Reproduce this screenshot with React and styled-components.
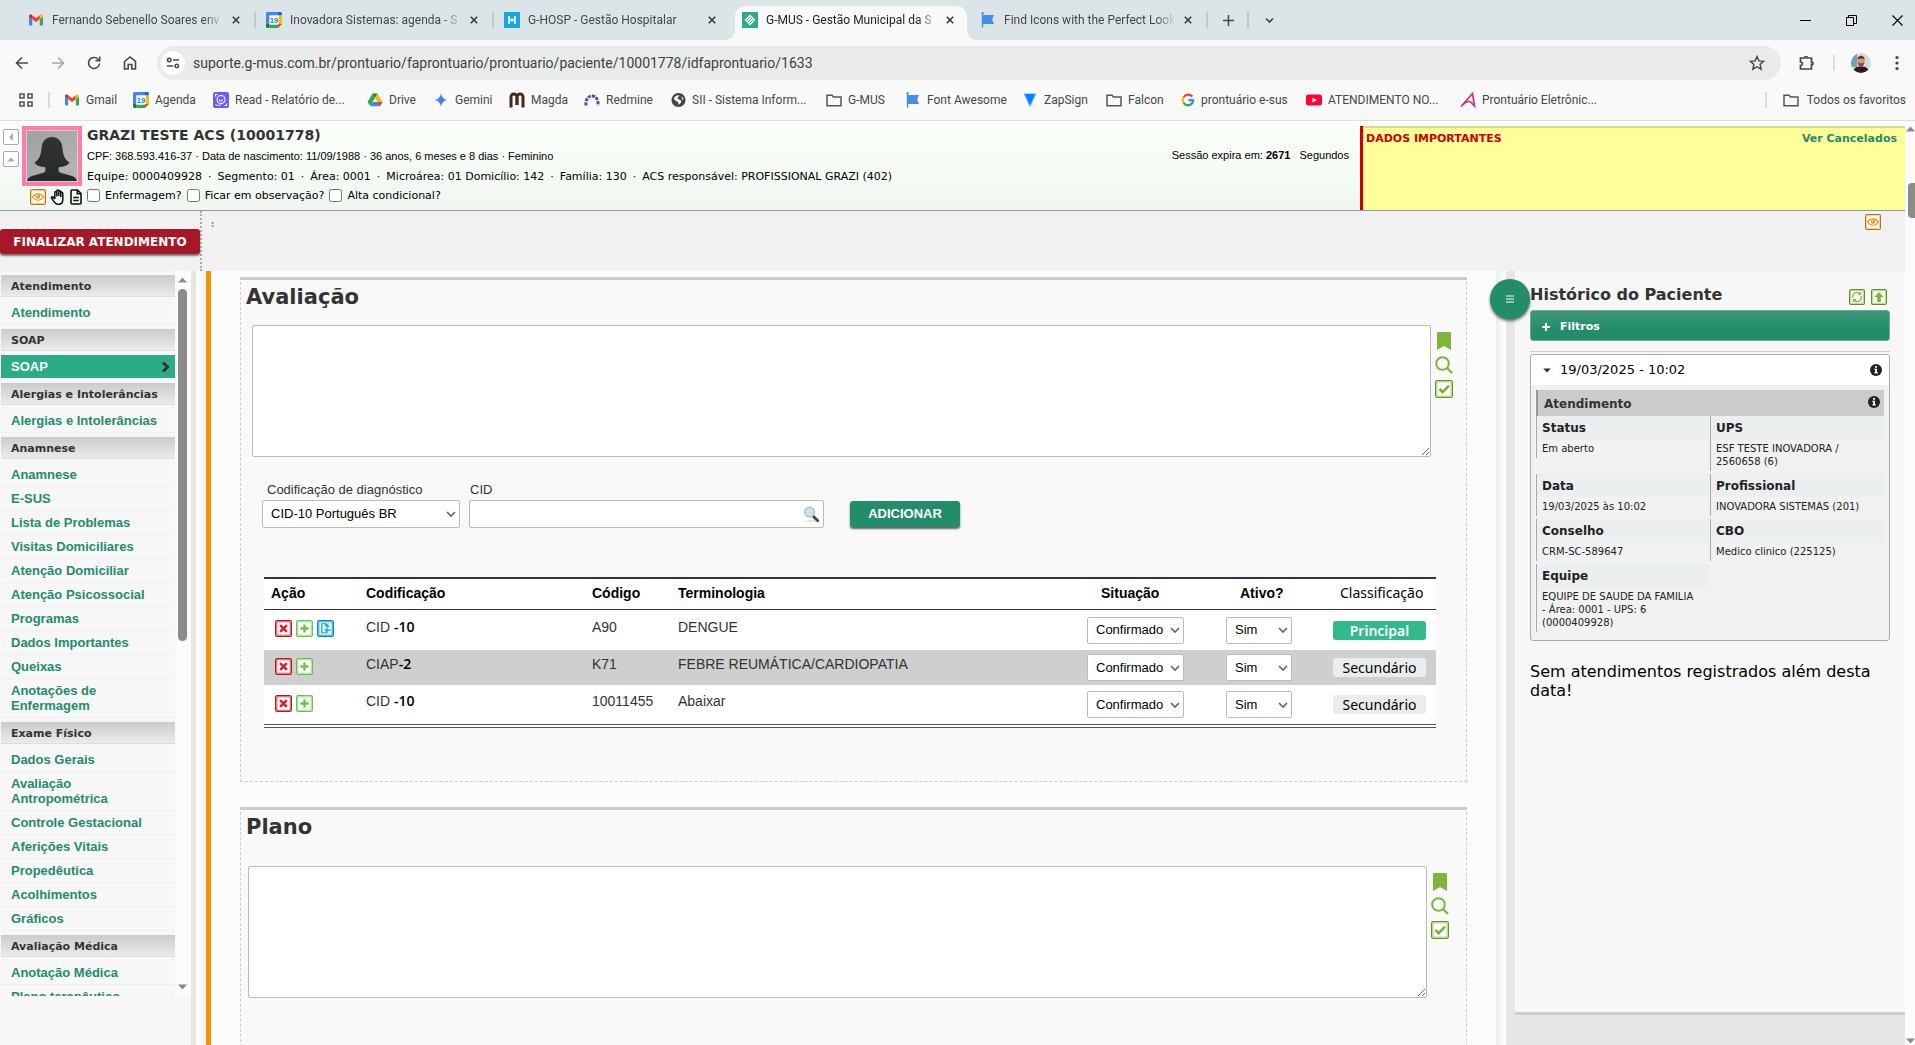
import React from "react";
import styled, { createGlobalStyle, css } from "styled-components";

const verdana = `Verdana, "DejaVu Sans", sans-serif`;
const arial = `Arial, "Liberation Sans", sans-serif`;
const chrome = `"Segoe UI", Roboto, sans-serif`;

const Global = createGlobalStyle`
  *, *::before, *::after { box-sizing: border-box; }
  body { margin: 0; background: #fff; font-family: ${verdana}; color: #000; }
  button { font: inherit; border: 0; padding: 0; background: none; color: inherit; cursor: pointer; }
  a { color: inherit; text-decoration: none; }
  h1, h2, h3, h4, p, ul, dl, dd { margin: 0; padding: 0; font: inherit; }
  ul { list-style: none; }
  svg { display: block; flex: none; }
`;

const Screen = styled.div`
  display: flex;
  flex-direction: column;
  height: 100vh;
  overflow: hidden;
`;

/* ---------- browser frame ---------- */

const TabStrip = styled.div`
  display: flex;
  align-items: flex-end;
  height: 40px;
  padding-left: 18px;
  background: #dbe4e7;
  font: 12px/16px ${chrome};
  color: #444746;
`;

const Tab = styled.div`
  position: relative;
  display: flex;
  align-items: center;
  gap: 8px;
  width: 238px;
  height: 34px;
  padding: 0 16px 6px 10px;
  ${(p) =>
    p.$active &&
    css`
      width: 232px;
      margin: 0 3px;
      padding-left: 7px;
      padding-right: 13px;
      background: #f9f9f9;
      color: #1f1f1f;
      border-radius: 10px 10px 0 0;
      &::before, &::after {
        content: "";
        position: absolute;
        bottom: 0;
        width: 10px;
        height: 10px;
      }
      &::before { left: -10px; background: radial-gradient(circle at 0 0, transparent 10px, #f9f9f9 10px); }
      &::after { right: -10px; background: radial-gradient(circle at 100% 0, transparent 10px, #f9f9f9 10px); }
    `}
`;

const TabTitle = styled.span`
  flex: 1;
  overflow: hidden;
  white-space: nowrap;
  mask-image: linear-gradient(90deg, #000 calc(100% - 20px), transparent);
`;

const TabRule = styled.span`
  width: 2px;
  height: 16px;
  margin: 0 0 12px -2px;
  background: #b9cbd0;
`;

const StripButton = styled.button`
  display: grid;
  place-items: center;
  width: 41px;
  height: 34px;
  padding-bottom: 6px;
`;

const WindowButtons = styled.div`
  display: flex;
  margin-left: auto;
  button { width: 46px; color: #000; }
  button:last-child { width: 41px; padding-left: 5px; }
`;

const Toolbar = styled.div`
  display: flex;
  align-items: center;
  height: 46px;
  padding-left: 4px;
  background: #f9f9f9;
  color: #474747;
`;

const ToolButton = styled.button`
  display: grid;
  place-items: center;
  width: 36px;
  height: 34px;
  opacity: ${(p) => (p.$dim ? 0.45 : 1)};
`;

const AddressBar = styled.div`
  display: flex;
  align-items: center;
  flex: 1;
  height: 34px;
  margin: 0 8px 0 9px;
  padding: 0 16px 0 4px;
  border-radius: 17px;
  background: #e9ebea;
`;

const SiteInfo = styled.button`
  display: grid;
  place-items: center;
  width: 24px;
  height: 24px;
  border-radius: 12px;
  background: #fff;
`;

const Url = styled.input`
  flex: 1;
  border: 0;
  padding: 0 8px;
  background: none;
  outline: 0;
  font: 14px/20px ${chrome};
  color: #3c3f3e;
`;

const ToolRule = styled.span`
  width: 2px;
  height: 16px;
  margin: 0 ${(p) => p.$gap || 8}px;
  background: #cfe0e6;
`;

const Bookmarks = styled.nav`
  display: flex;
  align-items: center;
  height: 35px;
  padding: 0 9px 6px 18px;
  background: #f9f9f9;
  border-bottom: 1px solid #dcdedd;
  font: 12px/16px ${chrome};
  color: #474747;
`;

const Bookmark = styled.a`
  display: flex;
  align-items: center;
  gap: 6px;
  width: ${(p) => p.$w}px;
  white-space: nowrap;
`;

const AllBookmarks = styled.button`
  display: flex;
  align-items: center;
  gap: 8px;
  margin-left: auto;
  white-space: nowrap;
`;

/* ---------- page shell ---------- */

const Page = styled.div`
  display: flex;
  flex: 1;
  min-height: 0;
`;

const PageContent = styled.div`
  display: flex;
  flex-direction: column;
  flex: 1;
  min-width: 0;
`;

const PageScroll = styled.div`
  display: flex;
  flex-direction: column;
  align-items: flex-end;
  width: 10px;
  padding: 5px 0 1px;
  background: #fbfbfb;
`;

const PageThumb = styled.span`
  width: 7px;
  height: 35px;
  margin: 51px 0 auto;
  border-radius: 4px 0 0 4px;
  background: #8b8b8b;
`;

const PatientBar = styled.header`
  display: flex;
  height: 90px;
  background: linear-gradient(#fcfffa, #f0f7f1);
  border-bottom: 1px solid #999;
`;

const CollapseColumn = styled.div`
  display: flex;
  flex-direction: column;
  gap: 6px;
  width: 22px;
  padding: 8px 3px 0;
`;

const CollapseButton = styled.button`
  display: grid;
  place-items: center;
  width: 16px;
  height: 16px;
  border: 1px solid #aaa;
  border-radius: 2px;
  background: #fdfdfd;
`;

const PhotoColumn = styled.div`
  width: 65px;
  padding-top: 5px;
`;

const Photo = styled.div`
  width: 60px;
  height: 60px;
  border: 4px solid #ff7bac;
`;

const PhotoActions = styled.div`
  display: flex;
  align-items: center;
  gap: 4px;
  padding: 3px 0 0 8px;
`;

const PatientInfo = styled.div`
  flex: 1;
  padding-top: 5px;
  font: 11px/20px ${verdana};
  white-space: nowrap;
`;

const PatientName = styled.h1`
  margin-bottom: 2px;
  font: bold 14px/18px ${verdana};
  color: #333;
`;

const ArialLine = styled.p`
  font: 11px/20px ${arial};
`;

const TeamLine = styled.p`
  padding-top: 1px;
  span + span::before { content: "·"; margin: 0 6px; }
`;

const Flags = styled.div`
  display: flex;
  align-items: center;
  gap: 5px;
`;

const Flag = styled.label`
  display: flex;
  align-items: center;
  gap: 5px;
  line-height: 18px;
  input { width: 13px; height: 13px; margin: 0 0 2px; }
`;

const Session = styled.p`
  padding: 24px 11px 0 0;
  font: 11px/20px ${arial};
  white-space: nowrap;
  b { margin-right: 6px; }
`;

const Important = styled.section`
  display: flex;
  justify-content: space-between;
  width: 545px;
  margin-top: 5px;
  padding: 4px 8px 0 3px;
  border-left: 3px solid #c00;
  background: #ff9;
  box-shadow: inset 0 2px 1px #d9d97f;
  font: bold 11px/18px ${verdana};
  color: #c00;
  a { color: #238c6b; }
`;

const ActionBand = styled.div`
  display: flex;
  height: 60px;
  background: #f1f1f1;
`;

const FinishCell = styled.div`
  width: 202px;
  padding-top: 18px;
  border-right: 2px dotted #aaa;
`;

const FinishButton = styled.button`
  width: 200px;
  height: 25px;
  border-radius: 3px;
  background: #a61827;
  box-shadow: 0 2px 2px #777;
  color: #fff;
  font: bold 12px/26px ${verdana};
  white-space: nowrap;
`;

const BandMark = styled.span`
  flex: 1;
  padding: 8px 0 0 9px;
  font: bold 8px/12px ${verdana};
  color: #777;
`;

const BandIcon = styled.div`
  padding: 3px 24px 0 0;
`;

const Columns = styled.div`
  display: flex;
  flex: 1;
  min-height: 0;
`;

/* ---------- left menu ---------- */

const Sidebar = styled.nav`
  display: flex;
  align-items: stretch;
  width: 191px;
  padding-bottom: 49px;
  background: #f7f7f7;
  border-right: 1px solid #fcfcfc;
`;

const MenuList = styled.div`
  width: 175px;
  padding: 4px 0 0 1px;
  overflow: hidden;
`;

const MenuHeading = styled.h2`
  height: 22px;
  padding: 1px 0 0 10px;
  border-bottom: 1px solid #ddd;
  background: linear-gradient(#cbcbcb, #ebebeb);
  font: bold 11px/21px ${verdana};
  color: #333;
`;

const MenuGroup = styled.ul`
  padding: 4px 0;
`;

const MenuLink = styled.a`
  display: flex;
  align-items: center;
  justify-content: space-between;
  padding: 4px 4px 4px 10px;
  border-bottom: 1px solid #efefef;
  font: bold 13px/15px ${arial};
  color: #238c6b;
  ${(p) =>
    p.$selected &&
    css`
      background: #2cac86;
      border-bottom-color: #f7f7f7;
      color: #fff;
    `}
`;

const MenuText = styled.span`
  max-width: 150px;
`;

const MenuScroll = styled.div`
  display: flex;
  flex-direction: column;
  align-items: center;
  width: 15px;
  padding: 6px 0;
  background: #fbfbfb;
`;

const MenuThumb = styled.span`
  width: 9px;
  height: 352px;
  margin: 6px 0 auto;
  border-radius: 5px;
  background: #8b8b8b;
`;

const Gutter = styled.div`
  width: ${(p) => p.$w}px;
  background: #e6e7e4;
`;

const Shade = styled.div`
  width: 10px;
  background: linear-gradient(${(p) => (p.$right ? "90deg" : "270deg")}, #ececec, #fff 90%);
`;

/* ---------- record ---------- */

const Record = styled.main`
  flex: 1;
  min-width: 0;
  padding: 6px 29px 0;
  border-left: 5px solid #f29400;
  background: #fcfcfc;
`;

const Section = styled.section`
  padding-bottom: 53px;
  margin-bottom: 25px;
  border: 1px dashed #ccc;
  border-top: 3px solid #ccc;
  background: #f9f9f9;
`;

const SectionTitle = styled.h2`
  padding: 4px 5px ${(p) => p.$gap}px;
  font: bold 21px/26px ${verdana};
  color: #333;
`;

const NoteRow = styled.div`
  display: flex;
  gap: 4px;
  padding: 0 ${(p) => 24 - p.$indent}px 0 ${(p) => p.$indent}px;
`;

const Note = styled.textarea`
  display: block;
  flex: 1;
  height: 132px;
  border: 1px solid #bbb;
  border-radius: 2px;
  background: #fff;
`;

const NoteTools = styled.div`
  display: flex;
  flex-direction: column;
  align-items: center;
  gap: 6px;
  width: 18px;
  padding-top: 7px;
`;

const CodeForm = styled.form`
  display: flex;
  align-items: flex-end;
  padding: 25px 21px 49px;
`;

const Field = styled.div`
  display: flex;
  flex-direction: column;
  gap: 2px;
  width: ${(p) => p.$w}px;
  margin-right: ${(p) => p.$gap}px;
`;

const FieldLabel = styled.label`
  padding-left: ${(p) => p.$indent}px;
  font: 13px/16px ${arial};
  color: #333;
`;

const SelectBox = styled.div`
  position: relative;
  width: ${(p) => p.$w};
  height: ${(p) => p.$h}px;
  select {
    appearance: none;
    width: 100%;
    height: 100%;
    padding: 0 0 0 8px;
    border: 1px solid #bbb;
    border-radius: 2px;
    background: #fff;
    font: 13px/16px ${arial};
    color: #000;
  }
  svg {
    position: absolute;
    top: 50%;
    right: 4px;
    margin-top: -5px;
    pointer-events: none;
  }
`;

const SearchBox = styled.div`
  display: flex;
  align-items: center;
  height: 28px;
  padding-right: 3px;
  border: 1px solid #bbb;
  border-radius: 2px;
  background: #fff;
  input { flex: 1; min-width: 0; border: 0; outline: 0; background: none; font: 13px ${arial}; }
`;

const AddButton = styled.button`
  width: 110px;
  height: 26px;
  margin-bottom: 1px;
  border-radius: 3px;
  background: #238c6b;
  box-shadow: 0 2px 2px #666;
  color: #fff;
  font: bold 13px/24px ${arial};
`;

const TableWrap = styled.div`
  padding: 0 30px 0 23px;
`;

const CodeTable = styled.table`
  width: 100%;
  table-layout: fixed;
  border-collapse: separate;
  border-spacing: 0;
  background: #fff;
  font: 14px/18px ${arial};
  color: #333;
  tbody tr:last-child td { border-bottom: 4px double #555; }
`;

const Col = styled.col`
  width: ${(p) => (p.$w ? p.$w + "px" : "auto")};
`;

const Th = styled.th`
  height: 33px;
  padding: 0 0 2px ${(p) => p.$indent || 7}px;
  border-top: 2px solid #333;
  border-bottom: 1px solid #333;
  text-align: left;
  font-weight: bold;
  color: #000;
  ${(p) => p.$light && css`font: 14px/18px "Noto Sans", "Open Sans", sans-serif;`}
`;

const Tr = styled.tr`
  height: ${(p) => p.$h}px;
  background: ${(p) => (p.$striped ? "#cfcfcf" : "#fff")};
`;

const Td = styled.td`
  padding: 0 0 0 8px;
  vertical-align: middle;
`;

const TextTd = styled(Td)`
  padding: 0 0 7px 7px;
  b { font: 600 14px/18px "Open Sans", "Noto Sans", sans-serif; color: #000; }
`;

const RowActions = styled.div`
  display: flex;
  gap: 4px;
  padding: 0 0 3px 3px;
`;

const Badge = styled.button`
  display: block;
  width: 93px;
  height: 19px;
  border-radius: 3px;
  background: ${(p) => (p.$main ? "#32b98c" : "#e9eeed")};
  color: ${(p) => (p.$main ? "#fff" : "#000")};
  font: ${(p) => (p.$main ? 600 : 400)} 14px/19px "Noto Sans", "Open Sans", sans-serif;
`;

/* ---------- history ---------- */

const HistoryColumn = styled.aside`
  position: relative;
  display: flex;
  flex-direction: column;
  width: 390px;
  padding-bottom: 30px;
  background: #e6e6e4;
`;

const HistoryPanel = styled.div`
  flex: 1;
  padding: 13px 15px 0;
  border-bottom: 3px solid #ccc;
  background: #f7f7f7;
`;

const MenuFab = styled.button`
  position: absolute;
  top: 8px;
  left: -25px;
  display: grid;
  place-items: center;
  width: 40px;
  height: 40px;
  border-radius: 20px;
  background: #238c6b;
  box-shadow: 0 2px 3px #666;
`;

const HistoryHead = styled.div`
  display: flex;
  justify-content: space-between;
  height: 26px;
`;

const HistoryTitle = styled.h2`
  font: bold 16px/22px ${verdana};
  color: #333;
`;

const HistoryTools = styled.div`
  display: flex;
  gap: 6px;
  padding: 5px 3px 0 0;
  button { height: 16px; }
`;

const FilterButton = styled.button`
  display: flex;
  align-items: center;
  gap: 10px;
  width: 100%;
  height: 31px;
  padding: 2px 11px 0;
  border: 1px solid #7aa393;
  border-radius: 3px;
  background: linear-gradient(#3c9878, #238c6b 70%);
  color: #fff;
  font: bold 11px/20px ${verdana};
`;

const Rule = styled.hr`
  height: 1px;
  margin: 10px 0 2px;
  border: 0;
  background: #ccc;
`;

const Visit = styled.article`
  border: 1px solid #aaa;
  border-radius: 3px;
  background: #f1f1f1;
`;

const VisitHead = styled.button`
  display: flex;
  align-items: center;
  gap: 9px;
  width: 100%;
  height: 30px;
  padding: 0 7px 0 12px;
  border-radius: 3px 3px 0 0;
  background: #fff;
  font: 13px/20px ${verdana};
  text-align: left;
  span { flex: 1; }
`;

const VisitBody = styled.div`
  padding: 5px 5px 8px;
`;

const VisitTitle = styled.h3`
  display: flex;
  justify-content: space-between;
  height: 26px;
  padding: 6px 4px 0 6px;
  border-left: 2px solid #999;
  background: #cbcbcb;
  font: bold 12px/16px ${verdana};
  color: #333;
`;

const Facts = styled.dl`
  display: grid;
  grid-template-columns: 1fr 1fr;
  align-items: start;
  row-gap: 3px;
`;

const Fact = styled.div`
  border-left: 1px solid #aaa;
  dt {
    padding: 1px 0 0 5px;
    background: #ebeff0;
    font: bold 12px/22px ${verdana};
    color: #222;
  }
  dd {
    padding: 3px 12px 3px 5px;
    font: 10px/13px ${verdana};
    color: #222;
  }
`;

const Empty = styled.p`
  margin-top: 21px;
  font: 16px/19px ${verdana};
`;

/* ---------- drawings ---------- */

const Line = ({ d, s = 16, w = 1.6, c = "currentColor", vb = 16 }) => (
  <svg width={s} height={s} viewBox={`0 0 ${vb} ${vb}`} fill="none" stroke={c} strokeWidth={w}>
    <path d={d} />
  </svg>
);

const Close = () => <Line s={8} vb={8} w={1.5} c="#333" d="M.8.8l6.4 6.4M7.2.8L.8 7.2" />;

const Arrow = ({ up, w = 9, h = 6, c = "#8b8b8b" }) => (
  <svg width={w} height={h} viewBox="0 0 9 6">
    <path d={up ? "M0 5.5L4.5.5 9 5.5z" : "M0 .5L4.5 5.5 9 .5z"} fill={c} />
  </svg>
);

const Gmail = () => (
  <svg width="16" height="16" viewBox="0 0 16 16">
    <path d="M1 13.5V4.5l3.2 2.4v6.6H2a1 1 0 0 1-1-1z" fill="#4285f4" />
    <path d="M11.8 13.5V6.9L15 4.5v8a1 1 0 0 1-1 1z" fill="#34a853" />
    <path d="M4.2 3.2L8 6l3.8-2.8v3.9L8 10 4.2 7.1z" fill="#ea4335" />
    <path d="M1 4.6V4c0-1.6 1.7-2 2.7-1.2l.5.4v3.9z" fill="#c5221f" />
    <path d="M15 4.6V4c0-1.6-1.7-2-2.7-1.2l-.5.4v3.9z" fill="#fbbc04" />
  </svg>
);

const Calendar = () => (
  <svg width="16" height="16" viewBox="0 0 16 16">
    <path d="M1.5 0H12v3.5H3.5V12H0V1.5A1.5 1.5 0 0 1 1.5 0z" fill="#4285f4" />
    <path d="M12 0h2.5A1.5 1.5 0 0 1 16 1.5V3.5h-4z" fill="#1967d2" />
    <path d="M12.5 3.5H16V12h-3.5z" fill="#fbbc04" />
    <path d="M3.5 12.5H12V16H3.5z" fill="#34a853" />
    <path d="M0 12h3.5v4h-2A1.5 1.5 0 0 1 0 14.500z" fill="#188038" />
    <path d="M12 12h4l-4 4z" fill="#ea4335" />
    <path d="M3.5 3.5h9V12l-.5.5H3.5z" fill="#fff" />
    <text x="8" y="10.8" fontSize="7.5" fontWeight="700" fontFamily="Arial, Liberation Sans, sans-serif" textAnchor="middle" fill="#1a73e8">19</text>
  </svg>
);

const Hosp = () => (
  <svg width="16" height="16" viewBox="0 0 16 16">
    <path d="M0 0h16v16H0z" fill="#14a7dc" />
    <path d="M5 4v8M11 4v8M6 8h4M8 6.300v3.400" stroke="#fff" strokeWidth="1.6" />
  </svg>
);

const Gmus = () => (
  <svg width="16" height="16" viewBox="0 0 16 16">
    <path d="M0 0h16v16H0z" fill="#2cac86" />
    <path d="M8 2.500L13.500 8 8 13.500 2.500 8z" fill="#fff" />
    <path d="M4.500 8.500L8.500 4.500M6 10l4-4M7.500 11.500l4-4" stroke="#2cac86" strokeWidth=".9" />
  </svg>
);

const Flagged = () => (
  <svg width="16" height="16" viewBox="0 0 16 16">
    <path d="M1.500 1.200a1.200 1.200 0 1 1 1.700 1.100V3H14l-1.800 4.500L14 12H3.200v3.500H1.800V2.200z" fill="#448fe6" />
  </svg>
);

const Read = () => (
  <svg width="16" height="16" viewBox="0 0 16 16" fill="none" stroke="#fff">
    <rect width="16" height="16" rx="2" fill="#6d5cf6" stroke="none" />
    <circle cx="8" cy="7.500" r="4" strokeWidth="1.1" />
    <path d="M6.500 7.500a1.500 1.500 0 0 0 3 0M2.500 4.500v-2h2M11.500 13.500h2v-2" strokeWidth="1.1" />
    <path d="M2.500 12.500c2 1.500 4 1.200 5.500 0" strokeWidth="1" />
  </svg>
);

const Drive = () => (
  <svg width="16" height="16" viewBox="0 0 16 16">
    <path d="M5.500 1.500h5L8 6z" fill="#188038" />
    <path d="M5.500 1.500L8 6l-4.700 8L.5 10z" fill="#34a853" />
    <path d="M10.500 1.500L15.500 10H10.500L8 6z" fill="#fbbc04" />
    <path d="M5.700 10h9.800l-2.700 4.300H3.200z" fill="#4285f4" />
    <path d="M10.500 10h5l-2.500 4z" fill="#ea4335" />
  </svg>
);

const Gemini = () => (
  <svg width="16" height="16" viewBox="0 0 16 16">
    <defs>
      <linearGradient id="gem" x1="0" x2="1"><stop stopColor="#4fa0f5" /><stop offset=".6" stopColor="#3f7be8" /><stop offset="1" stopColor="#a9b7f0" /></linearGradient>
    </defs>
    <path d="M8 1c.6 4.200 2.800 6.400 7 7-4.200.6-6.400 2.800-7 7-.6-4.200-2.800-6.400-7-7 4.200-.6 6.400-2.800 7-7z" fill="url(#gem)" />
  </svg>
);

const Magda = () => (
  <Line w={3} c="#43291f" d="M2 15.500V4.800a2.900 2.900 0 0 1 5.800 0V13M8.200 13V4.800a2.900 2.900 0 0 1 5.800 0v10.700" />
);

const Redmine = () => (
  <svg width="16" height="16" viewBox="0 0 16 16" fill="none" stroke="#5b4b9f" strokeWidth="3">
    <path d="M2 13.500C1.500 7.500 4 4 8 4s6.500 3.500 6 9.500" strokeDasharray="3.2 1" />
  </svg>
);

const Globe = () => (
  <svg width="15" height="16" viewBox="0 0 16 16">
    <circle cx="8" cy="8" r="7.500" fill="#424548" />
    <path d="M3 6c1.500-2.500 4-3.500 6-3-.5 2-2 2-2 3.200 0 1.300 3.500 1 4 3.200.2 1.600-1.500 2.600-3 4 .2-2-.2-3-1.500-3.800C5.500 9 3.500 8 3 6z" fill="#f9f9f9" />
    <path d="M11 4l2.500 2.500L12 8z" fill="#f9f9f9" />
  </svg>
);

const Folder = () => <Line w={1.5} c="#555" d="M1 3.200h5l1.500 1.700H15v8.900H1z" />;

const Zap = () => (
  <svg width="16" height="16" viewBox="0 0 16 16">
    <path d="M1.500 1.500h13L8.600 14.500H7.400z" fill="#55c4fb" />
    <path d="M3 2h10L8 13z" fill="#0a7cff" />
  </svg>
);

const Google = () => (
  <svg width="14" height="14" viewBox="0 0 16 16" fill="none" strokeWidth="2.6">
    <path d="M12.800 4A6 6 0 0 0 3 4.800" stroke="#ea4335" />
    <path d="M3 4.800a6 6 0 0 0 0 6.400" stroke="#fbbc04" />
    <path d="M3 11.200A6 6 0 0 0 12 12.500" stroke="#34a853" />
    <path d="M12 12.500A6 6 0 0 0 13.800 8.200H8.500" stroke="#4285f4" />
  </svg>
);

const YouTube = () => (
  <svg width="16" height="16" viewBox="0 0 16 16">
    <rect y="2.500" width="16" height="11" rx="2.500" fill="#f03" />
    <path d="M6.500 5.500L11 8l-4.500 2.500z" fill="#fff" />
  </svg>
);

const Letter = () => <Line w={1.6} c="#e0266b" d="M1 14.500L12.500 1.500 14.500 14 10 9.500C6 9 3.500 11.500 1 14.500" />;

const Avatar = () => (
  <svg width="20" height="20" viewBox="0 0 20 20">
    <defs><clipPath id="av"><circle cx="10" cy="10" r="10" /></clipPath></defs>
    <g clipPath="url(#av)">
      <path d="M0 0h20v20H0z" fill="#d5dcd6" />
      <path d="M0 0h6v14H0z" fill="#6fa3ad" />
      <path d="M2 20c0-5 3-6.500 8-6.500s8 1.500 8 6.500z" fill="#2f1a26" />
      <ellipse cx="10" cy="8" rx="3.600" ry="5" fill="#d39a80" />
      <path d="M6.300 6.500c0-5 7.400-5 7.400 0-2-1.300-5.400-1.300-7.400 0z" fill="#5b3a2e" />
      <path d="M6.500 9c.5 6 6.500 6 7 0-1.500 1.800-5.500 1.800-7 0z" fill="#8a4a3a" />
    </g>
  </svg>
);

const Woman = () => (
  <svg width="52" height="52" viewBox="0 0 52 52">
    <defs>
      <linearGradient id="bg" x2="1" y2="1"><stop stopColor="#a0a0a0" /><stop offset="1" stopColor="#b5b5b5" /></linearGradient>
      <linearGradient id="fg" x2="0" y2="1"><stop stopColor="#333" /><stop offset="1" stopColor="#222b29" /></linearGradient>
    </defs>
    <path d="M0 0h52v52H0z" fill="url(#bg)" stroke="#dcdcdc" strokeWidth="1.5" />
    <path d="M1 51c1-6 11-6 17-8.500 1.500-.7 1.800-3 1-5.500-4 0-8-1-10.500-4.500 5-3 6.500-8 7-14C16 11 20 7 26 7s10 4 10.500 11.500c.5 6 2 11 7 14C41 36 37 37 33 37c-.8 2.500-.5 4.800 1 5.500 6 2.500 16 2.500 17 8.500z" fill="url(#fg)" />
  </svg>
);

const Boxed = ({ s = 16, edge, inner, fill = "#fff", children }) => (
  <svg width={s} height={s} viewBox="0 0 16 16" fill="none">
    <rect x=".6" y=".6" width="14.8" height="14.8" rx="1.5" fill={fill} stroke={edge} strokeWidth="1.2" />
    <rect x="1.7" y="1.7" width="12.6" height="12.6" stroke={inner} strokeWidth="1" />
    {children}
  </svg>
);

const EyeIcon = () => (
  <Boxed edge="#b9720f" inner="#fbcf8f">
    <path d="M2.500 8c3-4.300 8-4.300 11 0-3 4.300-8 4.300-11 0z" stroke="#f28c1a" strokeWidth="1.2" />
    <circle cx="8" cy="7.6" r="2.2" fill="#f28c1a" />
    <circle cx="7.4" cy="6.9" r=".8" fill="#fff" />
  </Boxed>
);

const HandIcon = () => (
  <Line w={1.5} c="#111" d="M4.800 10V3.600c0-1.500 2-1.500 2 0V7.500M6.800 7V2.200c0-1.500 2-1.500 2 0V7M8.800 7V2.800c0-1.500 2-1.500 2 0V7.500M10.800 8V4.400c0-1.400 2-1.400 2 0v6.200c0 2.800-1.500 4.800-4.300 4.800-2.500 0-3.500-1-4.700-3L1.600 9.200c-.6-1.300.9-2 1.700-1L4.800 10" />
);

const DocIcon = () => (
  <svg width="12" height="16" viewBox="0 0 12 16" fill="none" stroke="#111" strokeWidth="1.6">
    <path d="M1 2a1 1 0 0 1 1-1h5.500L11 4.500V14a1 1 0 0 1-1 1H2a1 1 0 0 1-1-1zM7.300 1v3.700H11M3.300 8.500h5.400M3.300 11.500h5.400" />
  </svg>
);

const BookmarkIcon = () => (
  <svg width="14" height="18" viewBox="0 0 14 18"><path d="M0 1.200Q0 0 1.200 0h11.600Q14 0 14 1.200V18l-7-4-7 4z" fill="#80b43c" /></svg>
);

const LensIcon = () => (
  <svg width="18" height="18" viewBox="0 0 18 18" fill="none" stroke="#80b43c" strokeWidth="2">
    <circle cx="7.5" cy="7.5" r="6.3" /><path d="M12 12l5 5" strokeWidth="2.4" />
  </svg>
);

const CheckIcon = () => (
  <Boxed s={18} edge="#5f9424" inner="#b4d88a"><path d="M4 8l2.800 2.800L12.500 5" stroke="#76b02e" strokeWidth="2.2" /></Boxed>
);

const DeleteIcon = () => (
  <Boxed s={17} edge="#b01822" inner="#ea5a63"><path d="M4.800 4.800l6.400 6.400M11.200 4.800l-6.400 6.400" stroke="#d81e2c" strokeWidth="2.4" /></Boxed>
);

const PlusIcon = () => (
  <Boxed s={17} edge="#6cbd52" inner="#a9de95"><path d="M8 4.200v7.600M4.200 8h7.600" stroke="#66c24a" strokeWidth="2.2" /></Boxed>
);

const ImportIcon = () => (
  <Boxed s={17} edge="#0e86b4" inner="#35b9e6" fill="#dff5fd"><path d="M10 12H4.500V3.500h4l2 2v1.500M8.300 3.500v2.300h2.200M13 9.500H8.500M10 7.500l-2 2 2 2" stroke="#1a9fd4" strokeWidth="1.1" /></Boxed>
);

const RefreshIcon = () => (
  <Boxed edge="#5f8f1f" inner="#b4d88a"><path d="M3.800 8.800A4.300 4.300 0 0 1 11 4.700M12.200 7.200A4.300 4.300 0 0 1 5 11.300M11.500 2.800v2.500H9M4.500 13.200v-2.500H7" stroke="#86bb3f" strokeWidth="1.3" /></Boxed>
);

const UpIcon = () => (
  <Boxed edge="#5f8f1f" inner="#b4d88a"><path d="M8 3l4.800 5H9.800v5H6.200V8h-3z" fill="#80b43c" /></Boxed>
);

const InfoIcon = () => (
  <svg width="12" height="12" viewBox="0 0 12 12">
    <circle cx="6" cy="6" r="6" fill="#222" />
    <path d="M5.100 2h1.900v1.700H5.100zM4.400 4.800H7V8.300h.8v1.200H4.400V8.300h.8V6h-.8z" fill="#fff" />
  </svg>
);

const GlassIcon = () => (
  <svg width="17" height="17" viewBox="0 0 17 17">
    <ellipse cx="8" cy="15" rx="6" ry="1.2" fill="#e6e6e6" />
    <path d="M10 10l5.500 5.500" stroke="#444" strokeWidth="2.8" />
    <circle cx="6.5" cy="6" r="4.8" fill="#cfe3ee" stroke="#b3bcc2" strokeWidth="1.4" />
  </svg>
);

/* ---------- data ---------- */

const tabs = [
  { icon: <Gmail />, title: "Fernando Sebenello Soares env" },
  { icon: <Calendar />, title: "Inovadora Sistemas: agenda - S" },
  { icon: <Hosp />, title: "G-HOSP - Gestão Hospitalar" },
  { icon: <Gmus />, title: "G-MUS - Gestão Municipal da S", active: true },
  { icon: <Flagged />, title: "Find Icons with the Perfect Look" },
];

const bookmarks = [
  [<Gmail />, "Gmail", 69],
  [<Calendar />, "Agenda", 80],
  [<Read />, "Read - Relatório de...", 154],
  [<Drive />, "Drive", 66],
  [<Gemini />, "Gemini", 76],
  [<Magda />, "Magda", 75],
  [<Redmine />, "Redmine", 87],
  [<Globe />, "SII - Sistema Inform...", 155],
  [<Folder />, "G-MUS", 79],
  [<Flagged />, "Font Awesome", 117],
  [<Zap />, "ZapSign", 84],
  [<Folder />, "Falcon", 75],
  [<Google />, "prontuário e-sus", 125],
  [<YouTube />, "ATENDIMENTO NO...", 154],
  [<Letter />, "Prontuário Eletrônic...", 150],
];

const team = [
  "Equipe: 0000409928",
  "Segmento: 01",
  "Área: 0001",
  "Microárea: 01 Domicílio: 142",
  "Família: 130",
  "ACS responsável: PROFISSIONAL GRAZI (402)",
];

const menu = [
  ["Atendimento", ["Atendimento"]],
  ["SOAP", ["SOAP"]],
  ["Alergias e Intolerâncias", ["Alergias e Intolerâncias"]],
  ["Anamnese", ["Anamnese", "E-SUS", "Lista de Problemas", "Visitas Domiciliares", "Atenção Domiciliar", "Atenção Psicossocial", "Programas", "Dados Importantes", "Queixas", "Anotações de Enfermagem"]],
  ["Exame Físico", ["Dados Gerais", "Avaliação Antropométrica", "Controle Gestacional", "Aferições Vitais", "Propedêutica", "Acolhimentos", "Gráficos"]],
  ["Avaliação Médica", ["Anotação Médica", "Plano terapêutico"]],
];

const codes = [
  { system: "CID ", version: "-10", code: "A90", term: "DENGUE", main: true, h: 40 },
  { system: "CIAP", version: "-2", code: "K71", term: "FEBRE REUMÁTICA/CARDIOPATIA", h: 35 },
  { system: "CID ", version: "-10", code: "10011455", term: "Abaixar", h: 43 },
];

const facts = [
  ["Status", "Em aberto"],
  ["UPS", "ESF TESTE INOVADORA / 2560658 (6)"],
  ["Data", "19/03/2025 às 10:02"],
  ["Profissional", "INOVADORA SISTEMAS (201)"],
  ["Conselho", "CRM-SC-589647"],
  ["CBO", "Medico clinico (225125)"],
  ["Equipe", "EQUIPE DE SAUDE DA FAMILIA - Área: 0001 - UPS: 6 (0000409928)"],
];

/* ---------- parts ---------- */

function Browser() {
  return (
    <>
      <TabStrip>
        {tabs.map((t, i) => (
          <React.Fragment key={t.title}>
            <Tab $active={t.active}>
              {t.icon}
              <TabTitle>{t.title}</TabTitle>
              <button aria-label="Fechar guia"><Close /></button>
            </Tab>
            {(i < 2 || i === 4) && <TabRule />}
          </React.Fragment>
        ))}
        <StripButton aria-label="Nova guia"><Line s={11} vb={11} w={1.5} d="M5.500 0v11M0 5.500h11" /></StripButton>
        <TabRule />
        <StripButton aria-label="Pesquisar guias"><Line s={9} vb={9} w={1.6} d="M1 2.500l3.500 3.500L8 2.500" /></StripButton>
        <WindowButtons>
          <StripButton aria-label="Minimizar"><Line s={11} vb={11} w={1} d="M0 5.500h11" /></StripButton>
          <StripButton aria-label="Restaurar"><Line s={11} vb={11} w={1} d="M.5 2.500h7v8h-7zM2.500 2.500v-2h8v8h-2.500" /></StripButton>
          <StripButton aria-label="Fechar"><Line s={11} vb={11} w={1.1} d="M.5.5l10 10M10.500.5l-10 10" /></StripButton>
        </WindowButtons>
      </TabStrip>
      <Toolbar>
        <ToolButton aria-label="Voltar"><Line d="M14 8H3M8 2.500L2.500 8 8 13.500" /></ToolButton>
        <ToolButton aria-label="Avançar" $dim><Line d="M2 8h11M8 2.500L13.500 8 8 13.500" /></ToolButton>
        <ToolButton aria-label="Recarregar"><Line d="M13.500 8.500A5.500 5.500 0 1 1 12 4.200l1.500 1.500M13.700 1.500v4.300H9.400" /></ToolButton>
        <ToolButton aria-label="Página inicial"><Line d="M2.500 6.500L8 2l5.500 4.500V14h-3.700V9.500H6.200V14H2.500z" /></ToolButton>
        <AddressBar>
          <SiteInfo aria-label="Informações do site">
            <Line s={14} vb={14} w={1.6} d="M1.500 4a1.700 1.700 0 1 0 3.400 0 1.700 1.700 0 1 0-3.400 0M7 4h6M1 10h6M9.100 10a1.700 1.700 0 1 0 3.400 0 1.700 1.700 0 1 0-3.400 0" />
          </SiteInfo>
          <Url aria-label="Endereço" defaultValue="suporte.g-mus.com.br/prontuario/faprontuario/prontuario/paciente/10001778/idfaprontuario/1633" />
          <button aria-label="Adicionar aos favoritos"><Line w={1.4} d="M8 1.500l1.900 4.400 4.800.4-3.600 3.200 1.100 4.700L8 11.700l-4.200 2.500 1.100-4.700L1.300 6.300l4.800-.4z" /></button>
        </AddressBar>
        <ToolButton aria-label="Extensões"><Line w={1.7} d="M1.500 3h4.300c-.5-2 2.900-2 2.400 0h4.300v4.200c2-.5 2 2.900 0 2.400V14h-11v-3.500c2.500.3 2.500-3.800 0-3.500z" /></ToolButton>
        <ToolRule />
        <ToolButton aria-label="Perfil"><Avatar /></ToolButton>
        <ToolButton aria-label="Menu">
          <svg width="4" height="16" viewBox="0 0 4 16" fill="#444"><circle cx="2" cy="2.5" r="1.6" /><circle cx="2" cy="8" r="1.6" /><circle cx="2" cy="13.5" r="1.6" /></svg>
        </ToolButton>
      </Toolbar>
      <Bookmarks>
        <button aria-label="Aplicativos"><Line w={1.6} c="#555" d="M2 2h4v4H2zM10 2h4v4h-4zM2 10h4v4H2zM10 10h4v4h-4z" /></button>
        <ToolRule $gap={14} />
        {bookmarks.map(([icon, label, w]) => (
          <Bookmark key={label} href="#" $w={w}>{icon}{label}</Bookmark>
        ))}
        <AllBookmarks><ToolRule /><Folder />Todos os favoritos</AllBookmarks>
      </Bookmarks>
    </>
  );
}

function Header() {
  return (
    <>
      <PatientBar>
        <CollapseColumn>
          <CollapseButton aria-label="Recolher à esquerda"><svg width="6" height="8" viewBox="0 0 6 8"><path d="M5 0v8L1 4z" fill="#aaa" /></svg></CollapseButton>
          <CollapseButton aria-label="Recolher acima"><Arrow up w={8} h={5} c="#aaa" /></CollapseButton>
        </CollapseColumn>
        <PhotoColumn>
          <Photo><Woman /></Photo>
          <PhotoActions><EyeIcon /><HandIcon /><DocIcon /></PhotoActions>
        </PhotoColumn>
        <PatientInfo>
          <PatientName>GRAZI TESTE ACS (10001778)</PatientName>
          <ArialLine>CPF: 368.593.416-37 · Data de nascimento: 11/09/1988 · 36 anos, 6 meses e 8 dias · Feminino</ArialLine>
          <TeamLine>{team.map((part) => <span key={part}>{part}</span>)}</TeamLine>
          <Flags>
            <Flag><input type="checkbox" />Enfermagem?</Flag>
            <Flag><input type="checkbox" />Ficar em observação?</Flag>
            <Flag><input type="checkbox" />Alta condicional?</Flag>
          </Flags>
        </PatientInfo>
        <Session>Sessão expira em: <b>2671</b> Segundos</Session>
        <Important><h2>DADOS IMPORTANTES</h2><a href="#">Ver Cancelados</a></Important>
      </PatientBar>
      <ActionBand>
        <FinishCell><FinishButton>FINALIZAR ATENDIMENTO</FinishButton></FinishCell>
        <BandMark>:</BandMark>
        <BandIcon><EyeIcon /></BandIcon>
      </ActionBand>
    </>
  );
}

function SideMenu() {
  return (
    <Sidebar>
      <MenuList>
        {menu.map(([heading, items]) => (
          <React.Fragment key={heading}>
            <MenuHeading>{heading}</MenuHeading>
            <MenuGroup>
              {items.map((item) => (
                <li key={item}>
                  <MenuLink href="#" $selected={item === "SOAP"}>
                    <MenuText>{item}</MenuText>
                    {item === "SOAP" && <Line s={10} vb={10} w={3} c="#333" d="M2 .5L6.500 5 2 9.500" />}
                  </MenuLink>
                </li>
              ))}
            </MenuGroup>
          </React.Fragment>
        ))}
      </MenuList>
      <MenuScroll aria-hidden="true"><Arrow up /><MenuThumb /><Arrow /></MenuScroll>
    </Sidebar>
  );
}

function Select({ id, label, w, h, value }) {
  return (
    <SelectBox $w={w} $h={h}>
      <select id={id} aria-label={label}><option>{value}</option></select>
      <Line s={10} vb={10} w={1.7} c="#666" d="M1 3l4 4 4-4" />
    </SelectBox>
  );
}

function NoteEditor({ label, indent }) {
  return (
    <NoteRow $indent={indent}>
      <Note aria-label={label} />
      <NoteTools>
        <button aria-label="Marcadores"><BookmarkIcon /></button>
        <button aria-label="Pesquisar"><LensIcon /></button>
        <button aria-label="Confirmar"><CheckIcon /></button>
      </NoteTools>
    </NoteRow>
  );
}

function CodesTable() {
  return (
    <TableWrap>
      <CodeTable>
        <colgroup><Col $w={95} /><Col $w={226} /><Col $w={86} /><Col /><Col $w={139} /><Col $w={107} /><Col $w={111} /></colgroup>
        <thead>
          <tr>
            <Th>Ação</Th><Th>Codificação</Th><Th>Código</Th><Th>Terminologia</Th>
            <Th $indent={22}>Situação</Th><Th $indent={22}>Ativo?</Th><Th $indent={15} $light>Classificação</Th>
          </tr>
        </thead>
        <tbody>
          {codes.map((r) => (
            <Tr key={r.code} $h={r.h} $striped={r.code === "K71"}>
              <Td>
                <RowActions>
                  <button aria-label="Excluir"><DeleteIcon /></button>
                  <button aria-label="Adicionar"><PlusIcon /></button>
                  {r.main && <button aria-label="Importar"><ImportIcon /></button>}
                </RowActions>
              </Td>
              <TextTd>{r.system}<b>{r.version}</b></TextTd>
              <TextTd>{r.code}</TextTd>
              <TextTd>{r.term}</TextTd>
              <Td><Select label="Situação" w="97px" h={27} value="Confirmado" /></Td>
              <Td><Select label="Ativo" w="66px" h={27} value="Sim" /></Td>
              <Td><Badge $main={r.main}>{r.main ? "Principal" : "Secundário"}</Badge></Td>
            </Tr>
          ))}
        </tbody>
      </CodeTable>
    </TableWrap>
  );
}

function RecordView() {
  return (
    <Record>
      <Section>
        <SectionTitle $gap={15}>Avaliação</SectionTitle>
        <NoteEditor label="Avaliação" indent={11} />
        <CodeForm onSubmit={(e) => e.preventDefault()}>
          <Field $w={198} $gap={9}>
            <FieldLabel htmlFor="coding" $indent={5}>Codificação de diagnóstico</FieldLabel>
            <Select id="coding" w="100%" h={28} value="CID-10 Português BR" />
          </Field>
          <Field $w={355} $gap={26}>
            <FieldLabel htmlFor="cid" $indent={1}>CID</FieldLabel>
            <SearchBox><input id="cid" type="text" /><GlassIcon /></SearchBox>
          </Field>
          <AddButton>ADICIONAR</AddButton>
        </CodeForm>
        <CodesTable />
      </Section>
      <Section>
        <SectionTitle $gap={26}>Plano</SectionTitle>
        <NoteEditor label="Plano" indent={7} />
      </Section>
    </Record>
  );
}

function History() {
  return (
    <HistoryColumn>
      <HistoryPanel>
        <HistoryHead>
          <HistoryTitle>Histórico do Paciente</HistoryTitle>
          <HistoryTools>
            <button aria-label="Atualizar"><RefreshIcon /></button>
            <button aria-label="Subir"><UpIcon /></button>
          </HistoryTools>
        </HistoryHead>
        <FilterButton><Line s={8} vb={8} w={2} d="M4 0v8M0 4h8" />Filtros</FilterButton>
        <Rule />
        <Visit>
          <VisitHead><Arrow w={8} h={5} c="#333" /><span>19/03/2025 - 10:02</span><InfoIcon /></VisitHead>
          <VisitBody>
            <VisitTitle>Atendimento<InfoIcon /></VisitTitle>
            <Facts>
              {facts.map(([k, v]) => (
                <Fact key={k}><dt>{k}</dt><dd>{v}</dd></Fact>
              ))}
            </Facts>
          </VisitBody>
        </Visit>
        <Empty>Sem atendimentos registrados além desta data!</Empty>
      </HistoryPanel>
      <MenuFab aria-label="Menu"><Line s={8} vb={8} w={1} c="#fff" d="M0 1h8M0 4h8M0 7h8" /></MenuFab>
    </HistoryColumn>
  );
}

export default function App() {
  return (
    <Screen>
      <Global />
      <Browser />
      <Page>
        <PageContent>
          <Header />
          <Columns>
            <SideMenu />
            <Gutter $w={5} />
            <Shade />
            <RecordView />
            <Shade $right />
            <Gutter $w={9} />
            <History />
          </Columns>
        </PageContent>
        <PageScroll aria-hidden="true">
          <Arrow up /><PageThumb /><Arrow />
        </PageScroll>
      </Page>
    </Screen>
  );
}
